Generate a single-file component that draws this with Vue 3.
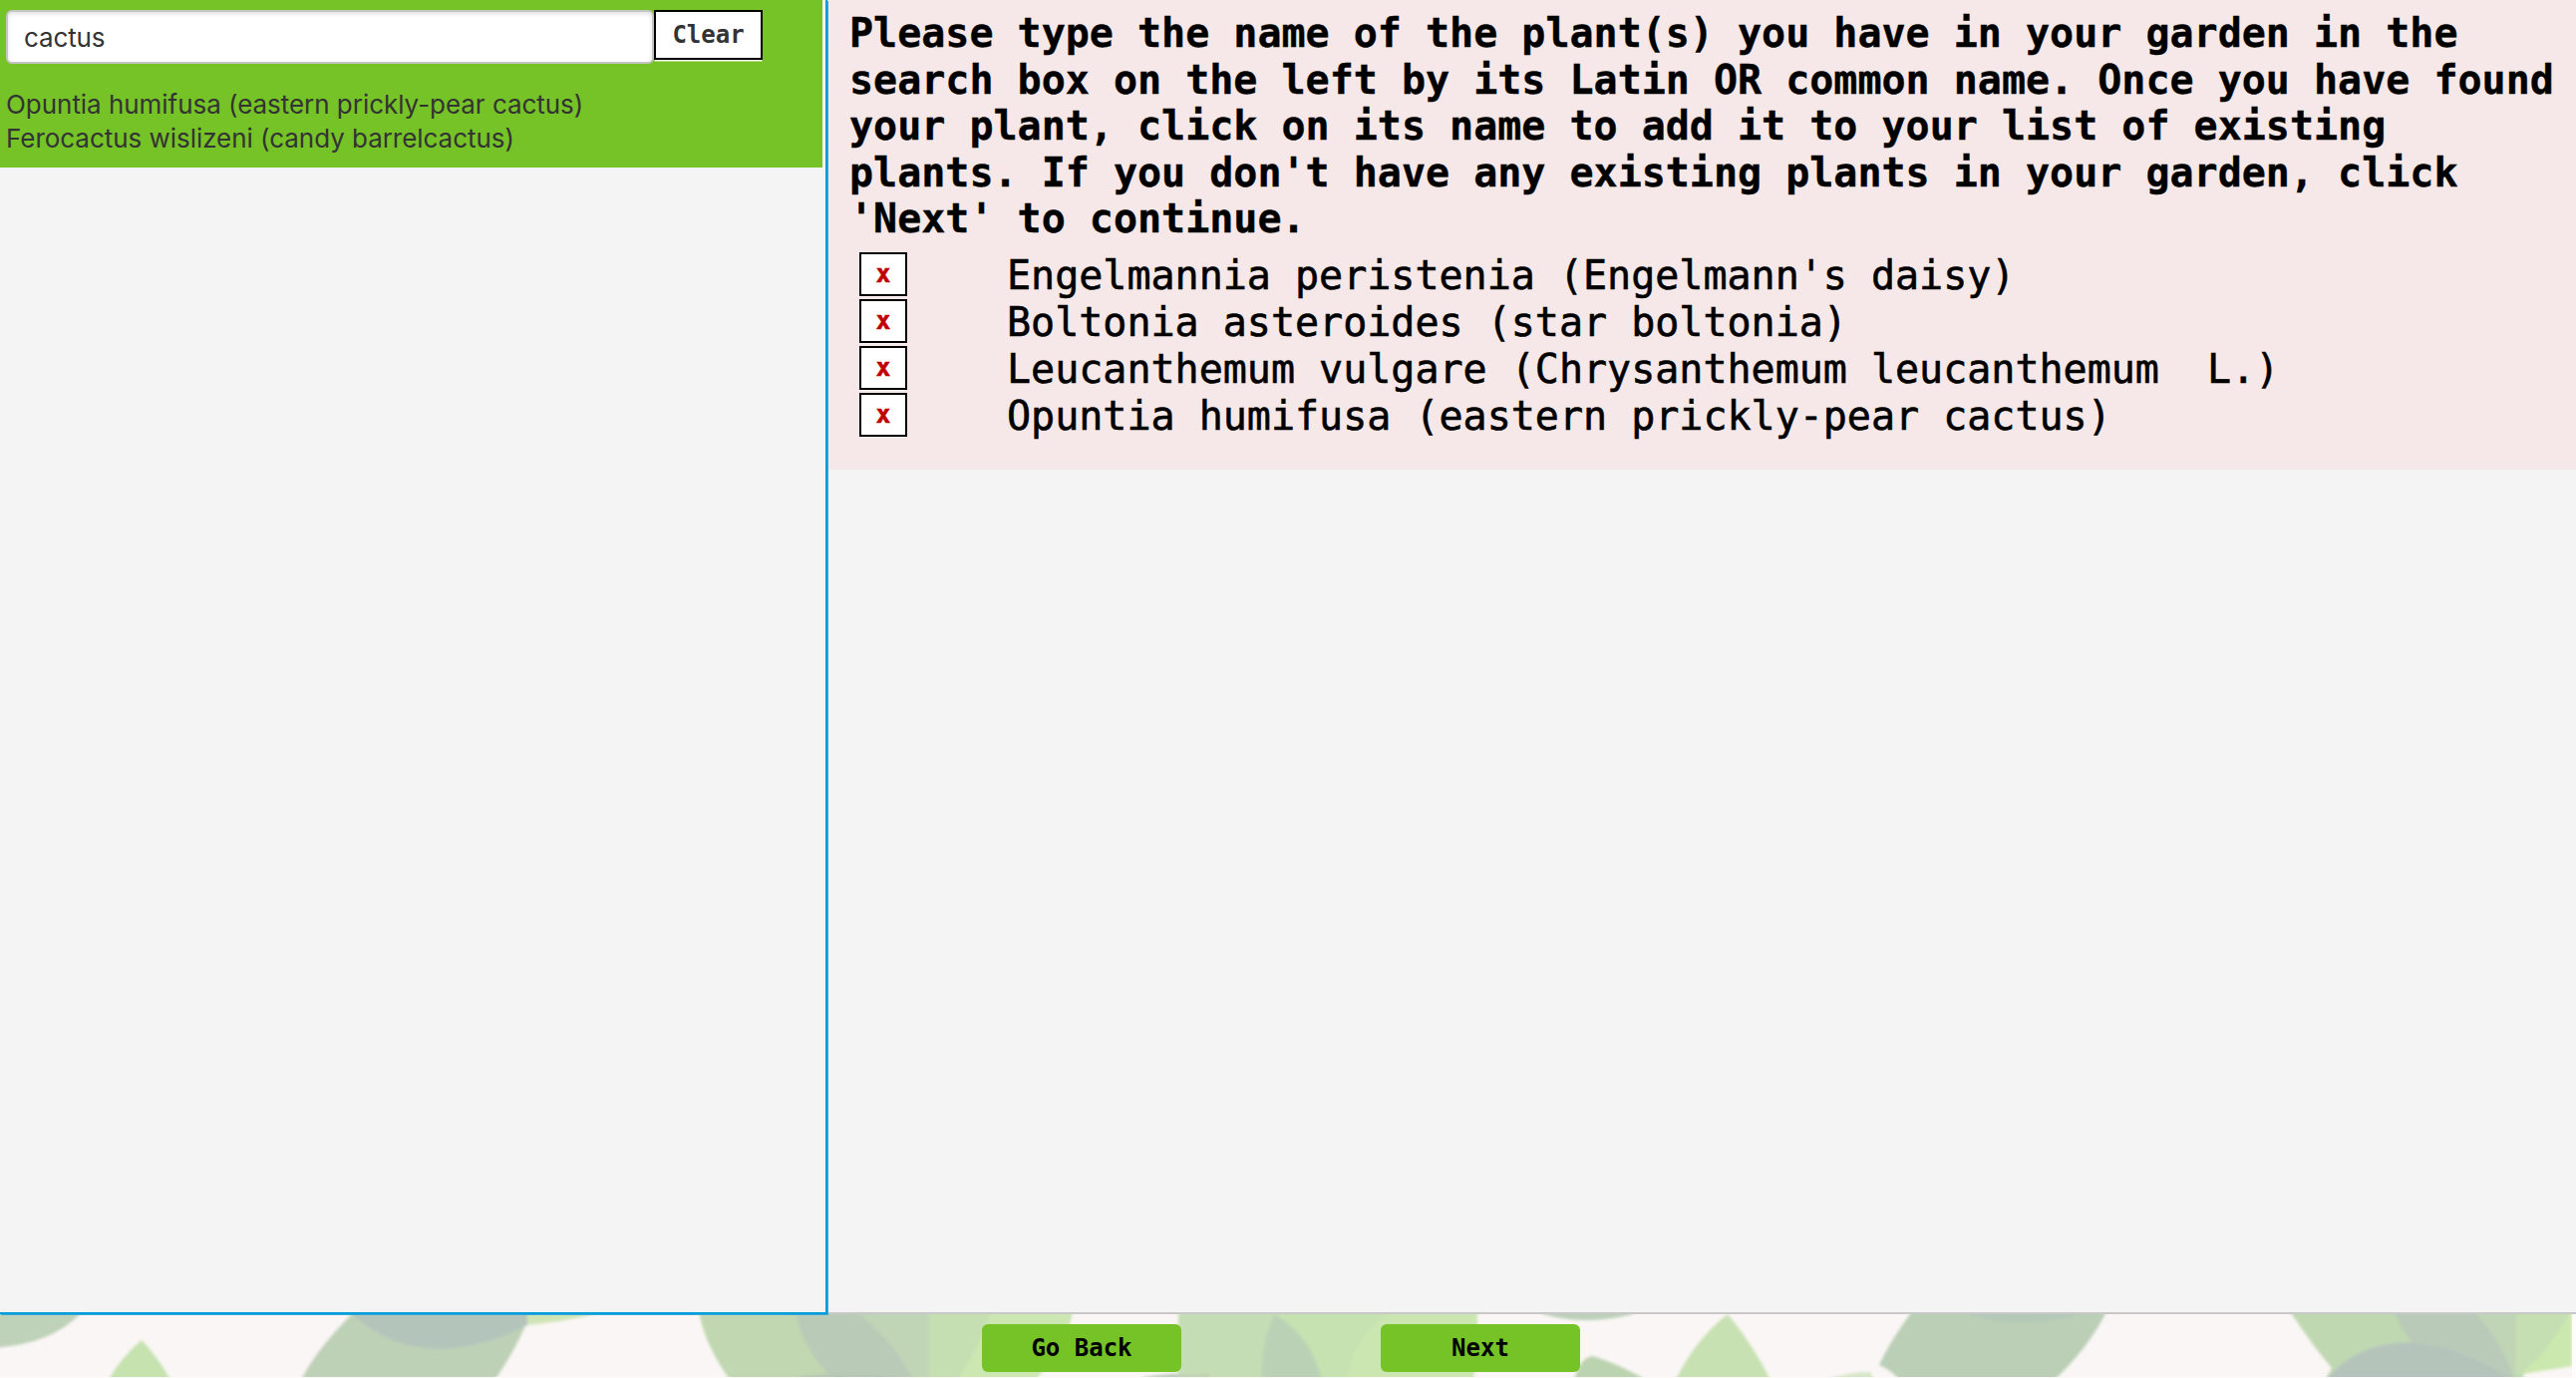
<script setup>
import { ref } from 'vue'

const query = ref('cactus')
const results = ref([
  'Opuntia humifusa (eastern prickly-pear cactus)',
  'Ferocactus wislizeni (candy barrelcactus)',
])
const plants = ref([
  "Engelmannia peristenia (Engelmann's daisy)",
  'Boltonia asteroides (star boltonia)',
  'Leucanthemum vulgare (Chrysanthemum leucanthemum  L.)',
  'Opuntia humifusa (eastern prickly-pear cactus)',
])
</script>

<template>
  <div class="page">
    <main class="columns">
      <aside class="sidebar">
        <section class="search">
          <div class="search-row">
            <input v-model="query" class="query" type="text" />
            <button class="outlined clear">Clear</button>
          </div>
          <ul class="results">
            <li v-for="name in results" :key="name"><span>{{ name }}</span></li>
          </ul>
        </section>
      </aside>
      <section class="content">
        <div class="garden">
          <h1>Please type the name of the plant(s) you have in your garden in the search box on the left by its Latin OR common name. Once you have found your plant, click on its name to add it to your list of existing plants. If you don't have any existing plants in your garden, click 'Next' to continue.</h1>
          <ul class="plants">
            <li v-for="(plant, i) in plants" :key="plant">
              <button class="outlined remove" @click="plants.splice(i, 1)">x</button>
              <span class="plant">{{ plant }}</span>
            </li>
          </ul>
        </div>
      </section>
    </main>
    <footer class="footer">
      <svg class="leaves" viewBox="0 1318 2584 64" width="2584" height="64" preserveAspectRatio="none">
        <defs>
          <filter id="soft" x="0" y="1300" width="2584" height="100" filterUnits="userSpaceOnUse">
            <feGaussianBlur stdDeviation="1.5" />
          </filter>
        </defs>
        <g filter="url(#soft)">
          <path fill="#bdd2b8" d="M-9 1300H96L80 1318Q50 1349 -9 1352Z" />
          <path fill="#c5e2af" d="M142 1344Q158 1360 176 1392H104Q120 1362 142 1344Z" />
          <path fill="#cfe4b6" d="M500 1300H640L595 1318Q560 1327 525 1329Z" />
          <path fill="#bdd1b6" d="M366 1300L353 1318Q315 1355 298 1392H491Q519 1352 529 1324V1300Z" />
          <path fill="#b3c4ba" d="M340 1300L353 1318Q390 1352 440 1353Q485 1352 529 1329V1300Z" />

          <path fill="#c0d7b1" d="M700 1300Q700 1342 738 1392H940V1300Z" />
          <path fill="#c0d5b6" d="M840 1300H934V1392H900Z" />
          <path fill="#c6dfb2" d="M932 1300H1078Q1075 1350 1030 1392H932Z" />
          <path fill="#cce7b1" d="M1000 1300H1078Q1072 1355 1028 1392H955Q985 1350 1000 1300Z" />
          <path fill="#b9cbb7" d="M797 1300Q797 1350 845 1392H920Q895 1335 835 1300Z" />
          <path fill="#b4c8b4" d="M785 1384Q840 1372 905 1382V1392H780Z" />
          <path fill="#bcccb9" d="M1145 1382Q1170 1376 1210 1378V1392H1145Z" />
          <path fill="#c5ddb5" d="M1182 1300H1300V1378H1182Z" />
          <path fill="#bfd3b3" d="M1182 1378H1215V1392H1182Z" />
          <path fill="#c6e2b0" d="M1280 1300H1482V1365L1475 1392H1275Z" />
          <path fill="#c5ddb5" d="M1214 1376H1290V1392H1214Z" />
          <path fill="#cce6b2" d="M1395 1318Q1355 1340 1350 1392H1476L1482 1360V1318Z" />
          <path fill="#bbd1b5" d="M1279 1318Q1264 1345 1266 1392H1328Q1318 1342 1279 1318Z" />

          <path fill="#bdd0ba" d="M1530 1300L1548 1318Q1590 1330 1638 1318V1300Z" />
          <path fill="#bcd3b0" d="M1578 1392Q1582 1362 1598 1360Q1630 1370 1665 1392Z" />
          <path fill="#c7e1b2" d="M1733 1318Q1760 1350 1780 1392H1677Q1698 1345 1733 1318Z" />
          <path fill="#d6e6c8" d="M1830 1384Q1855 1376 1876 1376L1884 1392H1825Z" />
          <path fill="#bacfb6" d="M1932 1300L1916 1318Q1896 1345 1885 1369Q1902 1376 1911 1392H2052Q2100 1350 2120 1300Z" />
          <path fill="#b4c9b8" d="M1950 1300L1975 1318Q2028 1335 2088 1318L2100 1300Z" />

          <path fill="#c0d8b1" d="M2289 1300L2299 1318Q2320 1350 2339 1372L2328 1392H2530L2540 1300Z" />
          <path fill="#bfd5b6" d="M2465 1300H2526V1379L2510 1392Z" />
          <path fill="#c6dfb2" d="M2524 1300H2580V1370Q2550 1374 2524 1379Z" />
          <path fill="#cbe8ae" d="M2580 1312Q2565 1345 2530 1378L2580 1370Z" />
          <path fill="#b9cbb8" d="M2396 1300Q2408 1345 2440 1360L2524 1388Q2510 1342 2468 1300Z" />
          <path fill="#b5c4bb" d="M2330 1388Q2360 1346 2420 1346Q2470 1350 2524 1386V1392H2330Z" />
        </g>
        <path fill="#fdfcfb" d="M0 1381H2584V1382H0ZM2580 1318H2584V1382H2580Z" />
      </svg>
      <nav class="actions">
        <button class="step">Go Back</button>
        <button class="step">Next</button>
      </nav>
    </footer>
  </div>
</template>

<style>
body {
  margin: 0;
}
</style>

<style scoped>
.page {
  display: flex;
  flex-direction: column;
  width: 2584px;
  height: 1382px;
  overflow: hidden;
  background: #f4f4f4;
  font-family: "DejaVu Sans Mono", monospace;
  color: #000;
}

.page * {
  box-sizing: border-box;
}

ul,
h1 {
  margin: 0;
  padding: 0;
  list-style: none;
}

button {
  padding: 0;
  font: bold 24px/28px "DejaVu Sans Mono", monospace;
}

.columns {
  display: flex;
  height: 1316px;
}

.sidebar {
  position: relative;
  z-index: 1;
  width: 830px;
  height: 1318px;
  padding-right: 3px;
  border-right: 2px solid #039dd9;
  border-bottom: 2px solid #039dd9;
  box-shadow: 1px 1px 0 #35a9d9;
}

.search {
  height: 168px;
  padding: 10px 6px 0;
  background: #76c327;
}

.search-row {
  display: flex;
  align-items: flex-start;
}

.query {
  width: 650px;
  height: 54px;
  padding: 0 16px;
  border: 2px solid #c4c4c4;
  border-radius: 6px;
  background: #fff;
  box-shadow: inset 0 2px 4px rgba(0, 0, 0, 0.12);
  font: 26px/34px Inter, sans-serif;
  letter-spacing: -0.12px;
  color: #333;
  outline: none;
}

.outlined {
  border: 2px solid #000;
  background: #fff;
}

.clear {
  width: 109px;
  height: 50px;
  box-shadow: 0 2px 0 -0.5px #f4faee;
  color: #333;
}

.results {
  padding-top: 24px;
  font: 26px/34px Inter, sans-serif;
  letter-spacing: -0.04px;
  color: #333;
}

.results li {
  height: 34px;
  white-space: nowrap;
}

.content {
  flex: 1;
}

.garden {
  height: 471px;
  padding: 10px 0 0 22px;
  background: #f6e8e8;
}

h1 {
  width: 1720px;
  font: bold 40px/46.6px "DejaVu Sans Mono", monospace;
  -webkit-text-stroke: 0.4px #000;
}

.plants {
  padding: 10px 0 0 10px;
}

.plants li {
  display: flex;
  height: 47px;
}

.remove {
  width: 48px;
  height: 44px;
  box-shadow: 0 2px 0 -1px #fbf4f4;
  color: #c00000;
  -webkit-text-stroke: 0.6px #c00000;
}

.plant {
  padding-left: 100px;
  font-size: 40px;
  line-height: 47px;
  white-space: pre;
  -webkit-text-stroke: 0.6px #000;
}

.footer {
  display: grid;
  height: 66px;
  border-top: 2px solid #c8c8c8;
  background: #faf6f5;
}

.leaves,
.actions {
  grid-area: 1 / 1;
}

.leaves {
  display: block;
}

.actions {
  z-index: 1;
  display: flex;
  gap: 200px;
  padding: 10px 0 0 985px;
}

.step {
  width: 200px;
  height: 48px;
  border: 0;
  border-radius: 6px;
  background: #76c327;
  color: #000;
}
</style>
